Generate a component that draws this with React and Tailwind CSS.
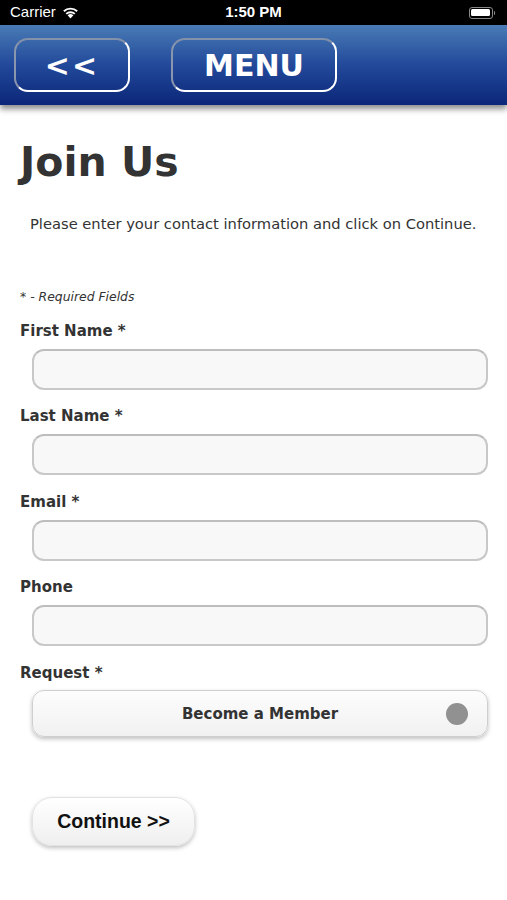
import React from 'react';

const fields = ['First Name *', 'Last Name *', 'Email *', 'Phone'];

function Wifi() {
  return (
    <svg width="17" height="13" viewBox="0 0 17 13" className="ml-1.5">
      <path d="M8.5 12.5 L5.6 9.3 A4.2 4.2 0 0 1 11.4 9.3 Z" fill="white" />
      <path d="M3.6 7.2 A7 7 0 0 1 13.4 7.2 L12.1 8.6 A5.2 5.2 0 0 0 4.9 8.6 Z" fill="white" />
      <path d="M1.2 4.6 A10.5 10.5 0 0 1 15.8 4.6 L14.5 6 A8.6 8.6 0 0 0 2.5 6 Z" fill="white" />
    </svg>
  );
}

export default function App() {
  return (
    <div className="w-[507px] min-h-[900px] bg-white" style={{ fontFamily: '"DejaVu Sans", Verdana, sans-serif' }}>
      <div className="h-[25px] bg-black flex items-center px-[10px] relative text-white" style={{ fontFamily: '"Liberation Sans", Arial, sans-serif' }}>
        <span className="text-[15px]">Carrier</span>
        <Wifi />
        <span className="absolute left-0 right-0 text-center text-[15px] font-semibold">1:50 PM</span>
        <div className="ml-auto flex items-center mr-[2px]">
          <div className="w-[24px] h-[12px] rounded-[3px] border border-[#888] p-[1.5px]">
            <div className="w-full h-full bg-white rounded-[1.5px]" />
          </div>
          <div className="w-[1.5px] h-[4px] bg-[#888] ml-[1px] rounded-r" />
        </div>
      </div>

      <div className="h-[80px] bg-gradient-to-b from-[#4a7bb5] via-[#23499a] to-[#0c2679] flex items-center pl-[14px] gap-[41px] shadow-[0_4px_6px_rgba(0,0,0,0.45)] relative">
        <div className="w-[116px] h-[54px] rounded-[14px] border-2 border-white border-t-[#8391aa] border-l-[#8a96ad] flex items-center justify-center text-white font-bold text-[30px] tracking-[2px]">
          &lt;&lt;
        </div>
        <div className="w-[166px] h-[54px] rounded-[14px] border-2 border-white border-t-[#8391aa] border-l-[#8a96ad] flex items-center justify-center text-white font-bold text-[30px]">
          MENU
        </div>
      </div>

      <div className="px-[20px]">
        <h1 className="text-[41px] font-bold text-[#333] mt-[37px] leading-none">Join Us</h1>
        <p className="text-[14.7px] text-[#333] mt-[30px] pl-[10px]">Please enter your contact information and click on Continue.</p>
        <p className="text-[12.4px] italic text-[#333] mt-[53px]">* - Required Fields</p>

        <div className="mt-[15px] flex flex-col">
          {fields.map((f) => (
            <div key={f} className="mb-[17.5px]">
              <label className="block text-[15px] font-bold text-[#333] leading-[18px]">{f}</label>
              <div className="ml-[12px] mt-[9px] h-[41px] w-[456px] rounded-[12px] bg-[#f8f8f8] border-2 border-[#c8c8c8] border-t-[#bdbdbd]" />
            </div>
          ))}
          <label className="block text-[15px] font-bold text-[#333] leading-[18px]">Request *</label>
          <div className="ml-[12px] mt-[8px] h-[47px] w-[456px] rounded-[12px] bg-gradient-to-b from-[#fdfdfd] to-[#f1f1f1] border border-[#cfcfcf] shadow-[0_2px_4px_rgba(0,0,0,0.25)] relative flex items-center justify-center">
            <span className="text-[15px] font-bold text-[#333] mt-[2px]">Become a Member</span>
            <div className="absolute right-[19px] top-[12px] w-[22px] h-[22px] rounded-full bg-[#919191]" />
          </div>
        </div>

        <div className="ml-[12px] mt-[60px] w-[163px] h-[49px] rounded-[20px] bg-gradient-to-b from-white to-[#efefef] border border-[#e2e2e2] shadow-[0_2px_4px_rgba(0,0,0,0.25)] flex items-center justify-center text-[19.5px] font-bold text-[#111]" style={{ fontFamily: '"Liberation Sans", Arial, sans-serif' }}>
          Continue &gt;&gt;
        </div>
      </div>
    </div>
  );
}
